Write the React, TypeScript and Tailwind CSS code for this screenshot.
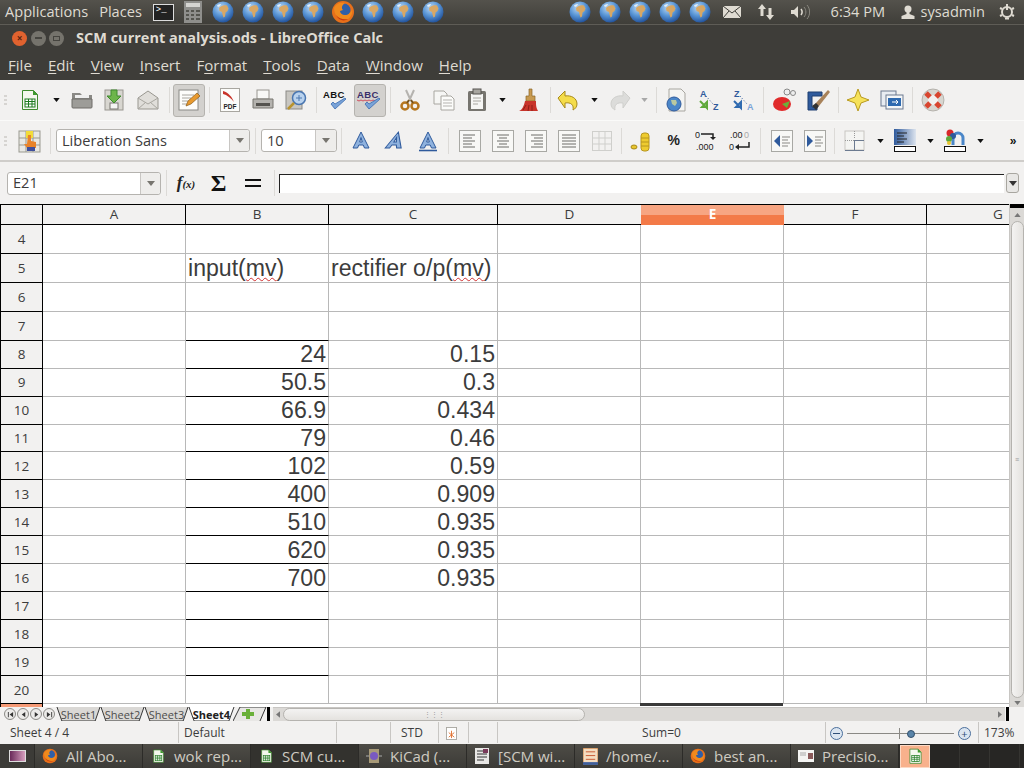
import type { ReactNode } from 'react'

const ui = 'font-["Open_Sans",sans-serif]'

function Globe() {
  return (
    <svg viewBox="0 0 24 24" className="w-[24px] h-[24px]">
      <defs>
        <radialGradient id="gl" cx="40%" cy="30%" r="75%">
          <stop offset="0%" stopColor="#bcd8f2" />
          <stop offset="50%" stopColor="#5a96d6" />
          <stop offset="100%" stopColor="#1d4c96" />
        </radialGradient>
      </defs>
      <circle cx="12" cy="12" r="10.500" fill="url(#gl)" />
      <path d="M9 7c2-1.500 5-2 7-1.500l1.500 3-1 2.500-2 1.500-.5 4-1.500 1-1-3-.5-2.500-2.500-1-.5-3z" fill="#d8a764" />
      <path d="M6 5.500c1-1 3-1.500 4-1.500l-1 2-2 1z" fill="#e4eef8" />
    </svg>
  )
}

function Firefox({ size = 24 }: { size?: number }) {
  return (
    <svg viewBox="0 0 24 24" width={size} height={size}>
      <circle cx="12" cy="12" r="11" fill="#e8701a" />
      <circle cx="13" cy="10" r="6.500" fill="#2f5fa8" />
      <path d="M3 8c0 9 8 14 14 11 3-2 5-6 4-10-1 4-4 6-7 6-3 0-5-2-5-4l3-1c-2-2-1-5 2-7C8 2 5 4 3 8z" fill="#f08a1d" />
      <path d="M5 15c2 5 8 7 12 4-4 1-9 0-12-4z" fill="#c9380f" />
    </svg>
  )
}

function CalcDoc({ size = 20 }: { size?: number }) {
  return (
    <svg viewBox="0 0 20 22" width={size} height={size * 1.1}>
      <path d="M2.500 1.500h11l4 4v15h-15z" fill="#f4f8ee" stroke="#3f8a2e" />
      <path d="M13 1l5 5h-5z" fill="#3f9a2e" />
      <rect x="5" y="10" width="10" height="8" fill="#fff" stroke="#1f7a1f" />
      <path d="M5 12.500h10M5 15h10M8.500 10v8M12 10v8" stroke="#1f7a1f" />
    </svg>
  )
}

function Drop({ light }: { light?: boolean }) {
  return (
    <svg viewBox="0 0 8 5" className="w-[7px] h-[4px]">
      <path d="M0 0h8L4 5z" fill={light ? '#a8a8a8' : '#111'} />
    </svg>
  )
}

function Sep() {
  return <div className="w-[1px] h-[26px] bg-[#dcdad7]" />
}

function S({ w, children }: { w: string; children?: ReactNode }) {
  return <div className={`${w} h-full flex items-center justify-center shrink-0`}>{children}</div>
}

function Grip() {
  return (
    <div className="w-[14px] h-full flex flex-col items-center justify-center gap-[2px] shrink-0 pr-[4px]">
      <div className="w-[3px] h-[2px] bg-[#d6d4d1]" />
      <div className="w-[3px] h-[2px] bg-[#d6d4d1]" />
      <div className="w-[3px] h-[2px] bg-[#d6d4d1]" />
    </div>
  )
}

function Ico({ w = 24, h = 24, children }: { w?: number; h?: number; children: ReactNode }) {
  return (
    <svg viewBox={`0 0 ${w} ${h}`} width={w} height={h}>
      {children}
    </svg>
  )
}

function Spell({ wavy }: { wavy?: boolean }) {
  return (
    <svg viewBox="0 0 28 24" width="28" height="24">
      <text x="1" y="10" fontFamily="Liberation Sans" fontWeight="700" fontSize="9.5" letterSpacing="0.4" fill={wavy ? '#3a2f6a' : '#111'}>ABC</text>
      {wavy && <path d="M1 12l2 1 2-1 2 1 2-1 2 1 2-1 2 1 2-1 2 1 2-1" stroke="#d04050" fill="none" strokeWidth="0.9" />}
      <path d="M9 16l4 5 11-10-1-1-10 6-2-2z" fill="#7aa3d8" stroke="#3a6cb0" strokeWidth="0.8" />
    </svg>
  )
}

function Align({ rows }: { rows: string[] }) {
  return (
    <svg viewBox="0 0 22 22" width="22" height="22">
      <rect x="0.500" y="0.500" width="21" height="21" fill="#f8f8f6" stroke="#a8a8a4" />
      {rows.map((d, i) => (
        <path key={i} d={d} stroke="#6c6c68" strokeWidth="1" />
      ))}
    </svg>
  )
}

function LetterA({ kind }: { kind: 'b' | 'i' | 'u' }) {
  return (
    <svg viewBox="0 0 22 22" width="22" height="22">
      <g transform={kind === 'i' ? 'skewX(-18) translate(5 0)' : undefined}>
        <path
          d="M11 2l8 16h-4.500l-1.300-3H8.800l-1.300 3H3z M11 7.500l-1.300 4.500h2.600z"
          fill="#8fb2de"
          fillRule="evenodd"
          stroke="#2f5a9c"
          strokeWidth="1"
        />
      </g>
      {kind === 'u' && <path d="M2 20.500h18" stroke="#2f5a9c" strokeWidth="1.600" />}
    </svg>
  )
}

function Combo({ w, text, drop }: { w: string; text: string; drop: string }) {
  return (
    <div className={`${w} h-[23px] flex bg-white border border-[#b5b3af] rounded-[3px] ${ui} text-[14.600px] text-[#3c3c3c] shrink-0`}>
      <div className="flex-1 flex items-center pl-[5px]">{text}</div>
      <div className={`${drop} flex items-center justify-center border-l border-[#c8c6c3] bg-[#eeedeb] rounded-r-[3px]`}>
        <svg viewBox="0 0 8 5" className="w-[8px] h-[5px]"><path d="M0 0h8L4 5z" fill="#77756f" /></svg>
      </div>
    </div>
  )
}

function PanelIcons() {
  return (
    <>
      <S w="w-[30px]"><Globe /></S>
      <S w="w-[30px]"><Globe /></S>
      <S w="w-[30px]"><Globe /></S>
      <S w="w-[30px]"><Globe /></S>
    </>
  )
}

function TopPanel() {
  return (
    <div className={`h-[25px] flex items-center bg-gradient-to-b from-[#54524c] to-[#3f3e39] border-b border-[#5e5c56] text-[#dfdbd2] text-[14.600px] ${ui} shrink-0`}>
      <span className="ml-[5px]">Applications</span>
      <span className="ml-[11px]">Places</span>
      <div className="ml-[11px] w-[21px] h-[17px] bg-[#222] border border-[#ddd] flex items-start pl-[2px]">
        <span className="font-['Liberation_Mono'] text-[9px] leading-[11px] text-white">&gt;_</span>
      </div>
      <svg viewBox="0 0 18 22" className="ml-[10px] w-[18px] h-[22px]">
        <rect width="18" height="22" fill="#8f8f8c" />
        <rect x="2" y="2" width="14" height="4" fill="#d5d5d2" />
        <path d="M2 9h3v2H2zM7 9h3v2H7zM12 9h4v2h-4zM2 13h3v2H2zM7 13h3v2H7zM12 13h4v2h-4zM2 17h3v2H2zM7 17h3v2H7zM12 17h4v2h-4z" fill="#55554f" />
      </svg>
      <div className="ml-[6px] flex h-full">
        <PanelIcons />
        <S w="w-[30px]"><Firefox /></S>
        <S w="w-[30px]"><Globe /></S>
        <S w="w-[30px]"><Globe /></S>
        <S w="w-[30px]"><Globe /></S>
      </div>
      <div className="ml-auto flex h-full items-center">
        <S w="w-[30px]"><Globe /></S>
        <S w="w-[30px]"><Globe /></S>
        <S w="w-[30px]"><Globe /></S>
        <S w="w-[30px]"><Globe /></S>
        <S w="w-[30px]"><Globe /></S>
        <S w="w-[34px]">
          <svg viewBox="0 0 18 12" width="18" height="12">
            <rect width="18" height="12" fill="#dfdbd2" />
            <path d="M0 0l9 7 9-7M0 12l6-7M18 12l-6-7" stroke="#3f3e39" fill="none" />
          </svg>
        </S>
        <S w="w-[34px]">
          <svg viewBox="0 0 18 18" width="18" height="18">
            <path d="M5 1l4 5H6.500v7h-3V6H1zM13 17l-4-5h2.500V5h3v7H17z" fill="#dfdbd2" />
          </svg>
        </S>
        <S w="w-[34px]">
          <svg viewBox="0 0 20 16" width="20" height="16">
            <path d="M1 6h3l4-4v12l-4-4H1z" fill="#dfdbd2" />
            <path d="M11 5c1.500 2 1.500 4 0 6" stroke="#dfdbd2" fill="none" strokeWidth="1.500" />
            <path d="M14 3c2.500 3 2.500 7 0 10M17 1c3.500 4 3.500 10 0 14" stroke="#8a8880" fill="none" />
          </svg>
        </S>
        <span className="ml-[14px] w-[54px] whitespace-nowrap">6:34 PM</span>
        <svg viewBox="0 0 14 14" className="ml-[16px] w-[14px] h-[14px]">
          <circle cx="7" cy="4" r="3.500" fill="#dfdbd2" />
          <path d="M5.500 7h3v2l5 2v3H.500v-3l5-2z" fill="#dfdbd2" />
        </svg>
        <span className="ml-[6px]">sysadmin</span>
        <svg viewBox="0 0 16 16" className="ml-[14px] mr-[9px] w-[16px] h-[16px]">
          <circle cx="8" cy="8" r="5" fill="none" stroke="#dfdbd2" strokeWidth="2" />
          <path d="M8 0v6M1 4l2 1M15 4l-2 1M1 12l2-1M15 12l-2-1M6 14.500h4" stroke="#dfdbd2" strokeWidth="2" />
        </svg>
      </div>
    </div>
  )
}

function TitleBar() {
  return (
    <div className={`h-[26px] flex items-center bg-[#3e3d39] ${ui} shrink-0`}>
      <div className="ml-[12px] w-[15px] h-[15px] rounded-full bg-[#e0622f] flex items-center justify-center text-[#5a2410] text-[10px] leading-none font-bold">×</div>
      <div className="ml-[4px] w-[15px] h-[15px] rounded-full bg-[#75736c] flex items-center justify-center">
        <div className="w-[7px] h-[2px] bg-[#45443f]" />
      </div>
      <div className="ml-[3px] w-[15px] h-[15px] rounded-full bg-[#75736c] flex items-center justify-center">
        <div className="w-[7px] h-[5px] border border-[#45443f]" />
      </div>
      <span className="ml-[12px] text-[14.500px] font-bold text-[#dfdbd2]">SCM current analysis.ods - LibreOffice Calc</span>
    </div>
  )
}

function M({ pre, u, post }: { pre?: string; u: string; post: string }) {
  return (
    <span>
      {pre}
      <span className="underline underline-offset-2">{u}</span>
      {post}
    </span>
  )
}

function MenuBar() {
  return (
    <div className={`h-[29px] flex items-center gap-[16px] pl-[8px] bg-[#3e3d39] text-[#dfdbd2] text-[15.100px] ${ui} shrink-0`}>
      <M u="F" post="ile" />
      <M u="E" post="dit" />
      <M u="V" post="iew" />
      <M u="I" post="nsert" />
      <M pre="F" u="o" post="rmat" />
      <M u="T" post="ools" />
      <M u="D" post="ata" />
      <M u="W" post="indow" />
      <M u="H" post="elp" />
    </div>
  )
}

function Active({ children }: { children: ReactNode }) {
  return <div className="w-[32px] h-[33px] bg-[#d3d1ce] border border-[#b5b3af] rounded-[3px] flex items-center justify-center">{children}</div>
}

function Toolbar1() {
  return (
    <div className="h-[40px] flex items-center bg-[#f2f1f0] shrink-0">
      <Grip />
      <S w="w-[32px]"><CalcDoc size={20} /></S>
      <S w="w-[20px]"><Drop /></S>
      <S w="w-[32px]">
        <Ico>
          <path d="M2 5h8l2 2h10v5H2z" fill="#8a8985" />
          <path d="M2 11h20v8a1 1 0 0 1-1 1H3a1 1 0 0 1-1-1z" fill="#9d9c98" stroke="#6e6d69" />
          <path d="M5 7h14v3H5z" fill="#eee" />
        </Ico>
      </S>
      <S w="w-[32px]">
        <Ico>
          <rect x="3" y="2" width="18" height="20" fill="#d8d6d0" stroke="#98968f" />
          <rect x="8" y="15" width="8" height="6" fill="#f5f5f3" stroke="#77756f" />
          <path d="M9 2h6v6h4l-7 7-7-7h4z" fill="#6db54a" stroke="#3f8a2e" />
        </Ico>
      </S>
      <S w="w-[36px]">
        <Ico>
          <path d="M2 10l10-7 10 7v11H2z" fill="#e0deda" stroke="#98968f" />
          <path d="M2 10l10 6 10-6M2 21l8-7M22 21l-8-7" fill="none" stroke="#a8a6a0" />
        </Ico>
      </S>
      <S w="w-[6px]"><Sep /></S>
      <S w="w-[34px]">
        <Active>
          <Ico w={22} h={22}>
            <rect x="1" y="1" width="19" height="20" fill="#fdfdfb" stroke="#8a8985" />
            <path d="M4 6h12M4 9h9M4 12h6M4 15h5" stroke="#a8a6a0" />
            <path d="M8 17l2-5 9-8 3 3-9 8z" fill="#e89a2f" stroke="#8a5a1a" strokeWidth="0.700" />
          </Ico>
        </Active>
      </S>
      <S w="w-[6px]"><Sep /></S>
      <S w="w-[35px]">
        <Ico w={20} h={24}>
          <rect x="0.500" y="0.500" width="19" height="23" fill="#fcfcfa" stroke="#a8a6a0" />
          <path d="M3 3c6 2 9 6 11 11-3-4-7-7-11-8z" fill="#c8342a" />
          <text x="3.500" y="21" fontFamily="Liberation Sans" fontWeight="700" fontSize="6.500" fill="#222">PDF</text>
        </Ico>
      </S>
      <S w="w-[32px]">
        <Ico>
          <rect x="6" y="2" width="12" height="9" fill="#f8f8f6" stroke="#98968f" />
          <path d="M2 11h20v9H2z" fill="#b5b3af" stroke="#77756f" />
          <rect x="5" y="15" width="14" height="3" fill="#55534f" />
        </Ico>
      </S>
      <S w="w-[34px]">
        <Ico>
          <rect x="2" y="3" width="16" height="18" fill="#c8c6c1" stroke="#8a8985" />
          <circle cx="15" cy="10" r="6.500" fill="#b9d2ee" stroke="#4a76b0" strokeWidth="1.500" />
          <path d="M15 7v6M12 10h6" stroke="#4a76b0" />
          <path d="M10 15l-6 6" stroke="#b8932e" strokeWidth="2.500" />
        </Ico>
      </S>
      <S w="w-[6px]"><Sep /></S>
      <S w="w-[34px]"><Spell /></S>
      <S w="w-[34px]"><Active><Spell wavy /></Active></S>
      <S w="w-[7px]"><Sep /></S>
      <S w="w-[32px]">
        <Ico>
          <path d="M8 2l5 11M16 2l-5 11" stroke="#b5b3af" strokeWidth="2" />
          <circle cx="7" cy="18" r="3.500" fill="none" stroke="#b5761f" strokeWidth="2.500" />
          <circle cx="17" cy="18" r="3.500" fill="none" stroke="#b5761f" strokeWidth="2.500" />
          <path d="M9 15l2-3M15 15l-2-3" stroke="#77521a" strokeWidth="2" />
        </Ico>
      </S>
      <S w="w-[35px]">
        <Ico>
          <path d="M2 3h10l3 3v10H2z" fill="#f6f6f4" stroke="#a8a6a0" />
          <path d="M9 8h10l3 3v11H9z" fill="#fcfcfa" stroke="#a8a6a0" />
          <path d="M11 12h9M11 15h9M11 18h9" stroke="#b5b3af" />
        </Ico>
      </S>
      <S w="w-[32px]">
        <Ico>
          <rect x="3" y="3" width="18" height="20" rx="1.500" fill="#77756f" />
          <rect x="6" y="6" width="12" height="15" fill="#f6f6f4" />
          <rect x="8" y="1" width="8" height="5" fill="#a8a6a0" stroke="#55534f" />
          <path d="M8 10h8M8 13h8M8 16h5" stroke="#a8a6a0" />
        </Ico>
      </S>
      <S w="w-[18px]"><Drop /></S>
      <S w="w-[36px]">
        <Ico>
          <path d="M12 1h3v7h3v5H9V8h3z" fill="#c89a50" stroke="#8a6526" strokeWidth="0.700" />
          <path d="M8 13h11v3c0 3 1 5 2 7H2c3-1 5-5 6-10z" fill="#c8342a" />
          <path d="M6 22l3-5M11 23l1-6M15 23l0-6" stroke="#8e1f18" />
        </Ico>
      </S>
      <S w="w-[6px]"><Sep /></S>
      <S w="w-[30px]">
        <Ico>
          <path d="M9 3v5c6-1 12 2 12 8 0 3-2 5-4 6 1-5-2-8-8-7v5L2 10z" fill="#f4dc4a" stroke="#a88a1a" />
        </Ico>
      </S>
      <S w="w-[22px]"><Drop /></S>
      <S w="w-[30px]">
        <Ico>
          <path d="M15 3v5C9 7 3 10 3 16c0 3 2 5 4 6-1-5 2-8 8-7v5l7-10z" fill="#dcdcda" stroke="#cfcfcc" />
        </Ico>
      </S>
      <S w="w-[18px]"><Drop light /></S>
      <S w="w-[7px]"><Sep /></S>
      <S w="w-[32px]">
        <Ico>
          <path d="M5 1h12l4 4v18H5z" fill="#f4f4f2" stroke="#a8a6a0" />
          <circle cx="10" cy="16" r="7" fill="#4a86c8" stroke="#2f5a9c" />
          <path d="M7 12h5l1 3-2 3-3-2z" fill="#b9c9a0" />
        </Ico>
      </S>
      <S w="w-[36px]">
        <svg viewBox="0 0 24 24" width="24" height="24">
          <text x="2" y="9" fontFamily="Liberation Sans" fontWeight="700" fontSize="9" fill="#2f5a9c">A</text>
          <text x="15" y="22" fontFamily="Liberation Sans" fontWeight="700" fontSize="9" fill="#2f5a9c">Z</text>
          <path d="M8 8l7 8" stroke="#2f5a9c" strokeDasharray="1 2" />
          <path d="M2 13l7 7v-6l-5 5h6" fill="none" stroke="#5ea83a" strokeWidth="2" />
        </svg>
      </S>
      <S w="w-[32px]">
        <svg viewBox="0 0 24 24" width="24" height="24">
          <text x="2" y="9" fontFamily="Liberation Sans" fontWeight="700" fontSize="9" fill="#2f5a9c">Z</text>
          <text x="15" y="22" fontFamily="Liberation Sans" fontWeight="700" fontSize="9" fill="#7aa3d8">A</text>
          <path d="M8 8l7 8" stroke="#2f5a9c" strokeDasharray="1 2" />
          <path d="M2 13l7 7v-6l-5 5h6" fill="none" stroke="#2f6ab0" strokeWidth="2" />
        </svg>
      </S>
      <S w="w-[7px]"><Sep /></S>
      <S w="w-[34px]">
        <Ico>
          <ellipse cx="10" cy="16" rx="9" ry="7" fill="#e02a2a" />
          <path d="M10 16l8-3-3 7z" fill="#6ab03a" />
          <circle cx="15" cy="4" r="3" fill="#eee" stroke="#888" />
          <circle cx="21" cy="5" r="2.500" fill="#eee" stroke="#888" />
        </Ico>
      </S>
      <S w="w-[34px]">
        <Ico>
          <path d="M2 4h14v4H6v11h5v3H2z" fill="#2f5a9c" stroke="#1f3f70" />
          <path d="M9 16L22 2l2 2-11 14z" fill="#a8825a" />
          <path d="M6 18l4-3 3 3-3 4z" fill="#333" />
        </Ico>
      </S>
      <S w="w-[6px]"><Sep /></S>
      <S w="w-[34px]">
        <Ico>
          <path d="M12 1l3 8 8 3-8 3-3 8-3-8-8-3 8-3z" fill="#f6e25a" stroke="#b89a1f" />
        </Ico>
      </S>
      <S w="w-[34px]">
        <Ico>
          <rect x="1" y="3" width="15" height="15" fill="#e8ecf2" stroke="#6c7a90" />
          <rect x="6" y="7" width="17" height="14" fill="#f4f6f8" stroke="#6c7a90" />
          <rect x="8" y="10" width="13" height="8" fill="#2f6ab0" />
          <path d="M12 14h6m-2-2l2 2-2 2" stroke="#fff" fill="none" />
        </Ico>
      </S>
      <S w="w-[6px]"><Sep /></S>
      <S w="w-[36px]">
        <Ico>
          <circle cx="12" cy="12" r="8" fill="none" stroke="#d8d6d0" strokeWidth="6" />
          <path d="M5 5l4 4M19 5l-4 4M5 19l4-4M19 19l-4-4" stroke="#d8452f" strokeWidth="5" />
          <circle cx="12" cy="12" r="11" fill="none" stroke="#a8a6a0" strokeWidth="0.800" />
        </Ico>
      </S>
    </div>
  )
}

function Toolbar2() {
  const l = ['M4 5h12', 'M4 8h9', 'M4 11h12', 'M4 14h9', 'M4 17h12']
  const c = ['M5 5h12', 'M7 8h8', 'M5 11h12', 'M7 14h8', 'M5 17h12']
  const r = ['M6 5h12', 'M9 8h9', 'M6 11h12', 'M9 14h9', 'M6 17h12']
  const j = ['M4 5h14', 'M4 8h14', 'M4 11h14', 'M4 14h14', 'M4 17h14']
  return (
    <div className="h-[42px] flex items-center bg-[#f2f1f0] border-t border-[#fafaf9] border-b-[2px] border-b-[#cfcdca] shrink-0">
      <Grip />
      <S w="w-[32px]">
        <Ico>
          <rect x="1" y="2" width="21" height="21" fill="#e8e8e4" stroke="#99998f" />
          <path d="M8 2v21M15 2v21M1 9h21M1 16h21" stroke="#99998f" />
          <rect x="8" y="2" width="7" height="7" fill="#f2dc3a" />
          <path d="M10 6h3v6l5 1v6h-9l-3-4 3 0z" fill="#e8832a" />
          <rect x="9" y="18" width="8" height="4" fill="#3f4f9c" />
        </Ico>
      </S>
      <S w="w-[9px]"><Sep /></S>
      <div className="w-[1px] shrink-0" />
      <Combo w="w-[194px]" text="Liberation Sans" drop="w-[20px]" />
      <S w="w-[11px]"><Sep /></S>
      <Combo w="w-[76px]" text="10" drop="w-[21px]" />
      <S w="w-[9px]"><Sep /></S>
      <S w="w-[30px]"><LetterA kind="b" /></S>
      <S w="w-[35px]"><LetterA kind="i" /></S>
      <S w="w-[33px]"><LetterA kind="u" /></S>
      <S w="w-[9px]"><Sep /></S>
      <S w="w-[33px]"><Align rows={l} /></S>
      <S w="w-[33px]"><Align rows={c} /></S>
      <S w="w-[33px]"><Align rows={r} /></S>
      <S w="w-[33px]"><Align rows={j} /></S>
      <S w="w-[33px]">
        <svg viewBox="0 0 20 20" width="20" height="20">
          <rect x="0.500" y="0.500" width="19" height="19" fill="none" stroke="#cfcfcc" />
          <path d="M7 0v20M13 0v20M0 7h20M0 13h20" stroke="#cfcfcc" />
        </svg>
      </S>
      <S w="w-[7px]"><Sep /></S>
      <S w="w-[32px]">
        <Ico>
          <path d="M2 18a3 2 0 1 0 6 0a3 2 0 1 0-6 0z" fill="#e8c52f" stroke="#a88a1a" />
          <rect x="12" y="4" width="8" height="18" rx="3" fill="#eecb30" stroke="#b8961f" />
          <path d="M12 9h8M12 13h8M12 17h8" stroke="#b8961f" />
        </Ico>
      </S>
      <S w="w-[33px]">
        <span className="font-['Liberation_Sans'] text-[14px] font-bold text-[#222] tracking-[-0.5px]">%</span>
      </S>
      <S w="w-[33px]">
        <svg viewBox="0 0 24 24" width="24" height="24">
          <text x="0" y="9" fontFamily="Liberation Sans" fontSize="9" fill="#222">0</text>
          <path d="M6 5h12v4" stroke="#222" fill="none" strokeWidth="1.500" />
          <path d="M15 8h6l-3 3z" fill="#222" />
          <text x="1" y="21" fontFamily="Liberation Sans" fontSize="9" fill="#222">.000</text>
        </svg>
      </S>
      <S w="w-[33px]">
        <svg viewBox="0 0 24 24" width="24" height="24">
          <text x="2" y="9" fontFamily="Liberation Sans" fontSize="9" fill="#222">.00</text>
          <text x="16" y="9" fontFamily="Liberation Sans" fontSize="9" fill="#aaa">0</text>
          <text x="1" y="21" fontFamily="Liberation Sans" fontSize="9" fill="#222">0</text>
          <path d="M21 13v5H9" stroke="#222" fill="none" strokeWidth="1.500" />
          <path d="M11 15v6l-4-3z" fill="#222" />
        </svg>
      </S>
      <S w="w-[9px]"><Sep /></S>
      <S w="w-[33px]">
        <svg viewBox="0 0 22 22" width="22" height="22">
          <rect x="0.500" y="0.500" width="21" height="21" fill="#f8f8f6" stroke="#a8a8a4" />
          <path d="M9 5v12l-6-6z" fill="#2f5a9c" />
          <path d="M11 7h8M11 10h6M11 13h8M11 16h6" stroke="#8a8985" />
        </svg>
      </S>
      <S w="w-[33px]">
        <svg viewBox="0 0 22 22" width="22" height="22">
          <rect x="0.500" y="0.500" width="21" height="21" fill="#f8f8f6" stroke="#a8a8a4" />
          <path d="M3 5v12l6-6z" fill="#2f5a9c" />
          <path d="M11 7h8M11 10h6M11 13h8M11 16h6" stroke="#8a8985" />
        </svg>
      </S>
      <S w="w-[7px]"><Sep /></S>
      <S w="w-[34px]">
        <svg viewBox="0 0 22 22" width="22" height="22">
          <rect x="1" y="1" width="19" height="19" fill="#f4f4f2" stroke="#c8c6c1" />
          <path d="M10.500 1v8" stroke="#999" strokeDasharray="1 1" />
          <path d="M1 10.500h9" stroke="#999" strokeDasharray="1 1" />
          <path d="M10.500 10v10M10 10.500h10M1 20.500h19" stroke="#6c7a90" />
        </svg>
      </S>
      <S w="w-[16px]"><Drop /></S>
      <S w="w-[34px]">
        <svg viewBox="0 0 22 24" width="22" height="24">
          <defs>
            <linearGradient id="bs" x1="0" y1="0" x2="1" y2="0">
              <stop offset="0%" stopColor="#2f5a9c" />
              <stop offset="100%" stopColor="#dde4ee" />
            </linearGradient>
          </defs>
          <rect width="22" height="16" fill="url(#bs)" />
          <path d="M3 4h10M3 7h7M3 10h10M3 13h7" stroke="#222" />
          <rect x="0.500" y="17.500" width="21" height="5" fill="#fff" stroke="#111" />
        </svg>
      </S>
      <S w="w-[16px]"><Drop /></S>
      <S w="w-[34px]">
        <svg viewBox="0 0 22 24" width="22" height="24">
          <path d="M9 16V9a5 5 0 0 1 10 0v7" fill="none" stroke="#4a86c8" strokeWidth="3" />
          <circle cx="6" cy="4" r="3.500" fill="#d8282a" />
          <circle cx="9" cy="7" r="3" fill="#2f5a9c" />
          <circle cx="5" cy="10" r="3" fill="#5ea83a" />
          <circle cx="5" cy="14" r="2" fill="#e8c52f" />
          <rect x="0.500" y="17.500" width="21" height="5" fill="#fff" stroke="#111" />
        </svg>
      </S>
      <S w="w-[16px]"><Drop /></S>
      <div className="flex-1 flex items-center justify-center pl-[14px] text-[#111] text-[12px] font-bold font-['Liberation_Sans']">»</div>
    </div>
  )
}

function FormulaBar() {
  return (
    <div className={`h-[42px] flex items-center bg-[#f2f1f0] shrink-0 ${ui}`}>
      <div className="w-[7px] shrink-0" />
      <Combo w="w-[154px]" text="E21" drop="w-[20px]" />
      <S w="w-[10px]"><Sep /></S>
      <S w="w-[30px]">
        <span className="font-['Liberation_Serif'] italic font-bold text-[17px] text-[#222]">f<span className="text-[11px]">(x)</span></span>
      </S>
      <S w="w-[35px]">
        <span className="font-['Liberation_Serif'] font-bold text-[24px] leading-none text-[#111]">Σ</span>
      </S>
      <S w="w-[33px]">
        <div className="flex flex-col gap-[4px]">
          <div className="w-[16px] h-[2px] bg-[#111]" />
          <div className="w-[16px] h-[2px] bg-[#111]" />
        </div>
      </S>
      <S w="w-[10px]"><Sep /></S>
      <div className="w-[725px] h-[19px] bg-white border-t border-l border-t-[#222] border-l-[#222] shrink-0" />
      <div className="ml-[2px] w-[13px] h-[20px] bg-[#e8e7e5] border border-[#a8a6a0] rounded-[3px] flex items-center justify-center">
        <svg viewBox="0 0 8 5" className="w-[8px] h-[5px]"><path d="M0 0h8L4 5z" fill="#333" /></svg>
      </div>
    </div>
  )
}

const colW = ['w-[143px]', 'w-[143px]', 'w-[169px]', 'w-[143px]', 'w-[143px]', 'w-[143px]', 'w-[82px]']
const letters = ['A', 'B', 'C', 'D', 'E', 'F', 'G']

function HeaderRow() {
  return (
    <div className={`h-[21px] flex border-t border-black ${ui} text-[13.500px] text-[#3c3c3c]`}>
      <div className="w-[42px] border-r border-b border-black bg-[#f2f1f0]" />
      {letters.map((c, i) =>
        c === 'E' ? (
          <div key={c} className={`${colW[i]} flex items-center justify-center font-bold text-white bg-[linear-gradient(#f7a582_0_50%,#f37a48_50%_100%)]`}>
            {c}
          </div>
        ) : (
          <div key={c} className={`${colW[i]} flex items-center justify-center border-r border-b border-black bg-[#f2f1f0] ${c === 'D' ? 'border-r-0' : ''} ${c === 'G' ? 'border-r-0 pl-[60px]' : ''}`}>
            {c}
          </div>
        ),
      )}
    </div>
  )
}

type RowData = { n: number; h: string; b?: ReactNode; c?: ReactNode; line?: boolean }

const wavy = 'underline decoration-wavy decoration-[#d03030] decoration-1 underline-offset-[1px]'

const rows: RowData[] = [
  { n: 4, h: 'h-[29px]' },
  { n: 5, h: 'h-[29px]', b: <span>input(<span className={wavy}>mv</span>)</span>, c: <span>rectifier o/p(<span className={wavy}>mv</span>)</span> },
  { n: 6, h: 'h-[29px]' },
  { n: 7, h: 'h-[29px]', line: true },
  { n: 8, h: 'h-[28px]', b: '24', c: '0.15', line: true },
  { n: 9, h: 'h-[28px]', b: '50.5', c: '0.3', line: true },
  { n: 10, h: 'h-[28px]', b: '66.9', c: '0.434', line: true },
  { n: 11, h: 'h-[28px]', b: '79', c: '0.46', line: true },
  { n: 12, h: 'h-[28px]', b: '102', c: '0.59', line: true },
  { n: 13, h: 'h-[28px]', b: '400', c: '0.909', line: true },
  { n: 14, h: 'h-[28px]', b: '510', c: '0.935', line: true },
  { n: 15, h: 'h-[28px]', b: '620', c: '0.935', line: true },
  { n: 16, h: 'h-[28px]', b: '700', c: '0.935', line: true },
  { n: 17, h: 'h-[28px]', line: true },
  { n: 18, h: 'h-[28px]', line: true },
  { n: 19, h: 'h-[28px]', line: true },
  { n: 20, h: 'h-[28px]' },
]

function Row({ r }: { r: RowData }) {
  const right = r.n >= 8 ? 'justify-end pr-[2px]' : 'justify-start pl-[2px]'
  return (
    <div className={`${r.h} flex`}>
      <div className={`w-[42px] flex items-center justify-center pt-[2px] border-r border-b border-black bg-[#f2f1f0] ${ui} text-[13.500px] text-[#3c3c3c]`}>{r.n}</div>
      {letters.map((c, i) => (
        <div
          key={c}
          className={`${colW[i]} flex items-center pt-[1px] whitespace-nowrap border-r border-b border-r-[#b8b8b8] ${c === 'B' && r.line ? 'border-b-black' : 'border-b-[#b8b8b8]'} ${right} ${c === 'G' ? 'border-r-0' : ''}`}
        >
          {c === 'B' && r.b}
          {c === 'C' && r.c}
        </div>
      ))}
    </div>
  )
}

function VScroll() {
  return (
    <div className="w-[15px] bg-[#dbd9d6] flex flex-col items-center shrink-0 border-l border-[#c8c6c3]">
      <div className="w-full h-[4px] bg-black" />
      <div className="w-full h-[13px] flex items-center justify-center">
        <svg viewBox="0 0 8 5" className="w-[7px] h-[4px]"><path d="M0 5h8L4 0z" fill="#777" /></svg>
      </div>
      <div className="w-[13px] h-[477px] bg-gradient-to-r from-[#f4f3f2] to-[#e4e2df] border border-[#b5b3af] rounded-[7px] flex items-center justify-center">
        <div className="text-[7px] leading-[3px] text-[#999]">≡</div>
      </div>
      <div className="w-full h-[8px] flex items-center justify-center mt-[1px]">
        <svg viewBox="0 0 8 5" className="w-[7px] h-[4px]"><path d="M0 0h8L4 5z" fill="#777" /></svg>
      </div>
    </div>
  )
}

function Grid() {
  return (
    <div className="h-[503px] flex overflow-hidden bg-white shrink-0">
      <div className="w-[1px] bg-black shrink-0" />
      <div className="w-[1008px] flex flex-col shrink-0 font-['Liberation_Sans'] text-[23.100px] leading-none text-[#3c3c3c]">
        <HeaderRow />
        {rows.map((r) => (
          <Row key={r.n} r={r} />
        ))}
        <div className="h-[3px] flex">
          <div className="w-[42px] bg-[#f59a76] border-r border-black" />
          <div className="w-[143px]" />
          <div className="w-[143px]" />
          <div className="w-[169px]" />
          <div className="w-[143px]" />
          <div className="w-[143px] -ml-[1px] mr-[1px] h-[3px] -mt-[1px] bg-[#3a3a3a]" />
        </div>
      </div>
      <VScroll />
    </div>
  )
}

function Tab({ name, active }: { name: string; active?: boolean }) {
  return (
    <div className={`relative h-[14px] flex items-center justify-center -mr-[1px] font-["Open_Sans",sans-serif] text-[11px] leading-none ${active ? 'w-[47px] font-bold text-[#222]' : 'w-[45px] text-[#4c4c4c]'}`}>
      <svg viewBox="0 0 46 14" preserveAspectRatio="none" className="absolute inset-0 w-full h-full">
        <path d="M1 0l5 14h34l5-14" fill={active ? '#fff' : '#dad8d5'} stroke="#222" strokeWidth="0.900" />
      </svg>
      <span className="relative">{name}</span>
    </div>
  )
}

function NavBtn({ d }: { d: string }) {
  return (
    <div className="w-[12px] h-[12px] rounded-full border border-[#8a8985] bg-[#ecebe9] flex items-center justify-center">
      <svg viewBox="0 0 8 8" className="w-[7px] h-[7px]"><path d={d} fill="#333" /></svg>
    </div>
  )
}

function TabBar() {
  return (
    <div className="h-[14px] flex items-center bg-[#f2f1f0] shrink-0">
      <div className="w-[4px]" />
      <div className="w-[52px] flex gap-[1px] shrink-0">
        <NavBtn d="M1 1h1v6H1zM7 1v6L3 4z" />
        <NavBtn d="M6 1v6L2 4z" />
        <NavBtn d="M2 1v6l4-3z" />
        <NavBtn d="M1 1v6l4-3zM6 1h1v6H6z" />
      </div>
      <Tab name="Sheet1" />
      <Tab name="Sheet2" />
      <Tab name="Sheet3" />
      <Tab name="Sheet4" active />
      <div className="relative w-[34px] h-[14px] flex items-center justify-center -ml-[1px]">
        <svg viewBox="0 0 34 14" className="absolute inset-0 w-full h-full">
          <path d="M0 14l7-14h26l-6 14" fill="#e8e7e5" stroke="#222" strokeWidth="0.900" />
          <path d="M13 2h4v3h4v4h-4v3h-4V9H9V5h4z" fill="#6ab03a" />
        </svg>
      </div>
      <div className="w-[3px] h-[14px] bg-black" />
      <div className="ml-[3px] w-[732px] h-[14px] bg-[#dbd9d6] border-t border-[#c8c6c3] flex items-center">
        <div className="w-[10px] flex justify-center">
          <svg viewBox="0 0 5 8" className="w-[4px] h-[7px]"><path d="M5 0v8L0 4z" fill="#777" /></svg>
        </div>
        <div className="w-[302px] h-[13px] bg-gradient-to-b from-[#f4f3f2] to-[#e4e2df] border border-[#b5b3af] rounded-[7px] flex items-center justify-center text-[7px] text-[#999] leading-none">⋮⋮⋮</div>
        <div className="ml-auto w-[10px] flex justify-center">
          <svg viewBox="0 0 5 8" className="w-[4px] h-[7px]"><path d="M0 0v8l5-4z" fill="#777" /></svg>
        </div>
      </div>
      <div className="w-[3px] h-[14px] bg-black ml-[1px]" />
    </div>
  )
}

function Cell({ w, children, last }: { w: string; children?: ReactNode; last?: boolean }) {
  return <div className={`${w} h-[21px] flex items-center shrink-0 pt-[1px] ${last ? '' : 'border-r border-[#c8c6c3]'}`}>{children}</div>
}

function StatusBar() {
  return (
    <div className={`h-[23px] flex items-center bg-[#f2f1f0] text-[12px] text-[#3c3c3c] ${ui} shrink-0`}>
      <Cell w="w-[179px]"><span className="ml-[10px]">Sheet 4 / 4</span></Cell>
      <Cell w="w-[158px]"><span className="ml-[5px]">Default</span></Cell>
      <Cell w="w-[54px]" />
      <Cell w="w-[48px]"><span className="ml-[10px]">STD</span></Cell>
      <Cell w="w-[30px]">
        <svg viewBox="0 0 12 14" className="ml-[7px] w-[11px] h-[13px]">
          <rect x="0.500" y="0.500" width="11" height="13" fill="#fff" stroke="#a8a6a0" />
          <path d="M3 6l6 5M9 6l-6 5M6 4v8" stroke="#e0702f" />
        </svg>
      </Cell>
      <Cell w="w-[29px]" />
      <Cell w="w-[328px]"><span className="w-full text-center">Sum=0</span></Cell>
      <Cell w="w-[153px]">
        <div className="ml-[4px] w-[13px] h-[13px] rounded-full border border-[#4a6f9c] bg-[#dbe5f0] flex items-center justify-center">
          <div className="w-[7px] h-[1px] bg-[#2f4f78]" />
        </div>
        <div className="relative ml-[4px] w-[107px] h-[1px] bg-[#8a8985]">
          <div className="absolute left-[52px] -top-[5px] w-[1px] h-[11px] bg-[#8a8985]" />
          <div className="absolute left-[60px] -top-[3px] w-[8px] h-[8px] rounded-full bg-[#5a84a8] border border-[#33506c]" />
        </div>
        <div className="ml-[4px] w-[13px] h-[13px] rounded-full border border-[#4a6f9c] bg-[#dbe5f0] flex items-center justify-center text-[#2f4f78] text-[11px] leading-none">+</div>
      </Cell>
      <Cell w="w-[45px]" last><span className="ml-[5px]">173%</span></Cell>
    </div>
  )
}

function TaskItem({ icon, label, active }: { icon: ReactNode; label: string; active?: boolean }) {
  return (
    <div className={`w-[108px] h-full flex items-center gap-[6px] pl-[5px] border-r border-[#2c2b28] shrink-0 overflow-hidden ${active ? 'bg-[#33322e]' : 'bg-gradient-to-b from-[#4e4c46] to-[#3c3b37]'}`}>
      <div className="w-[20px] flex justify-center shrink-0">{icon}</div>
      <span className="whitespace-nowrap">{label}</span>
    </div>
  )
}

function TaskBar() {
  return (
    <div className={`h-[24px] flex items-center bg-[#2f2e2b] text-[#cfcbc2] text-[15px] ${ui} shrink-0`}>
      <div className="w-[35px] h-full flex items-center justify-center border-r border-[#2c2b28] bg-[#3c3b37]">
        <div className="w-[17px] h-[12px] border border-[#ddd] bg-gradient-to-r from-[#6a2a5a] to-[#d8a0c0]" />
      </div>
      <TaskItem icon={<Firefox size={16} />} label="All Abo..." />
      <TaskItem icon={<CalcDoc size={13} />} label="wok rep..." />
      <TaskItem icon={<CalcDoc size={13} />} label="SCM cu..." active />
      <TaskItem
        icon={
          <svg viewBox="0 0 16 16" width="16" height="16">
            <rect x="3" y="1" width="10" height="14" fill="#a89a78" />
            <circle cx="8" cy="8" r="4" fill="#7a5ac0" />
            <path d="M0 8h3M13 8h3" stroke="#aaa" />
          </svg>
        }
        label="KiCad (..."
      />
      <TaskItem
        icon={
          <svg viewBox="0 0 14 16" width="14" height="16">
            <rect width="14" height="16" fill="#e8e7e5" />
            <path d="M2 3h6M2 6h10M2 9h10M2 12h7" stroke="#333" />
            <rect x="8" y="1" width="5" height="4" fill="#7a3a5a" />
          </svg>
        }
        label="[SCM wi..."
      />
      <TaskItem
        icon={
          <svg viewBox="0 0 16 18" width="15" height="17">
            <rect width="16" height="18" fill="#f4dcc0" stroke="#c8762f" />
            <path d="M3 4h10M3 8h10M3 12h10" stroke="#c8562f" />
            <rect y="15" width="16" height="3" fill="#3f5f9c" />
          </svg>
        }
        label="/home/..."
      />
      <TaskItem icon={<Firefox size={16} />} label="best an..." />
      <TaskItem
        icon={
          <svg viewBox="0 0 16 12" width="16" height="12">
            <rect width="16" height="12" fill="#f4f4f2" />
            <rect x="10" y="3" width="5" height="6" fill="#8a5a5a" />
            <path d="M2 3h6M2 5h6" stroke="#aaa" />
          </svg>
        }
        label="Precisio..."
      />
      <div className="ml-[1px] w-[30px] h-[23px] bg-[#f8b18c] border border-[#fbd9c5] flex items-center justify-center">
        <CalcDoc size={15} />
      </div>
      <div className="flex-1 h-full bg-[#272624] flex">
        <div className="w-[30px] border-r border-[#353431]" />
        <div className="w-[30px] border-r border-[#353431]" />
        <div className="w-[30px] border-r border-[#353431]" />
      </div>
    </div>
  )
}

export default function App() {
  return (
    <div className="w-[1024px] h-[768px] flex flex-col overflow-hidden bg-[#f2f1f0]">
      <TopPanel />
      <TitleBar />
      <MenuBar />
      <Toolbar1 />
      <Toolbar2 />
      <FormulaBar />
      <Grid />
      <TabBar />
      <StatusBar />
      <TaskBar />
    </div>
  )
}
